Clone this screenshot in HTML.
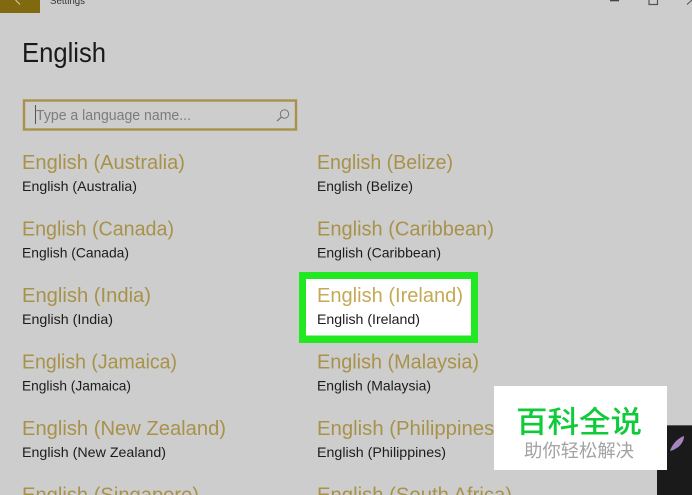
<!DOCTYPE html>
<html lang="en">
<head>
<meta charset="utf-8">
<title>English</title>
<style>
html,body{margin:0;padding:0;background:#cdcdcd;}
body{width:692px;height:495px;overflow:hidden;position:relative;font-family:"Liberation Sans",sans-serif;}
svg{position:absolute;left:0;top:0;}
.t{font-family:"Liberation Sans",sans-serif;font-size:20.5px;fill:#a8924a;}
.s{font-family:"Liberation Sans",sans-serif;font-size:14px;fill:#1c1c1c;}
.soft{filter:blur(0.3px);}
</style>
</head>
<body>
<svg width="692" height="495" viewBox="0 0 692 495" xmlns="http://www.w3.org/2000/svg">
  <rect width="692" height="495" fill="#cdcdcd"/>

  <!-- title bar -->
  <rect x="0" y="0" width="40" height="13" fill="#80690f"/>
  <g class="soft">
  <path d="M15.5 0 L20 4.5" fill="none" stroke="#d8cfa8" stroke-width="1"/>
  <text x="50" y="4" font-size="10.5" fill="#333" font-family="Liberation Sans, sans-serif" textLength="35" lengthAdjust="spacingAndGlyphs">Settings</text>
  <rect x="610" y="0" width="9" height="1.3" fill="#444"/>
  <path d="M649 0 V4.5 H657.5 V0" fill="none" stroke="#555" stroke-width="1.2"/>
  <path d="M687 4.5 L692 0" fill="none" stroke="#555" stroke-width="1.1"/>

  <!-- heading -->
  <text x="22" y="62" font-size="28" fill="#1a1a1a" font-family="Liberation Sans, sans-serif" textLength="84" lengthAdjust="spacingAndGlyphs">English</text>

  <!-- search box -->
  <rect x="24" y="100.5" width="272" height="29" fill="none" stroke="#a8924a" stroke-width="2.4"/>
  <rect x="35" y="105" width="1" height="19" fill="#555"/>
  <text x="36" y="120" font-size="14.5" fill="#7c7c7c" font-family="Liberation Sans, sans-serif" textLength="155" lengthAdjust="spacingAndGlyphs">Type a language name...</text>
  <circle cx="284.5" cy="114" r="4.2" fill="none" stroke="#777" stroke-width="1"/>
  <path d="M281.5 117 L277 121" stroke="#777" stroke-width="1.2" fill="none"/>
  </g>

  <!-- highlight -->
  <rect x="299" y="272" width="179" height="71" fill="#22e822"/>
  <rect x="306" y="279" width="165" height="56.5" fill="#ffffff"/>

  <g class="soft">
  <!-- left column -->
  <text class="t" x="22" y="169" textLength="163" lengthAdjust="spacingAndGlyphs">English (Australia)</text>
  <text class="s" x="22" y="191" textLength="115" lengthAdjust="spacingAndGlyphs">English (Australia)</text>
  <text class="t" x="22" y="235.5" textLength="152" lengthAdjust="spacingAndGlyphs">English (Canada)</text>
  <text class="s" x="22" y="257.5" textLength="107" lengthAdjust="spacingAndGlyphs">English (Canada)</text>
  <text class="t" x="22" y="302" textLength="129" lengthAdjust="spacingAndGlyphs">English (India)</text>
  <text class="s" x="22" y="324" textLength="91" lengthAdjust="spacingAndGlyphs">English (India)</text>
  <text class="t" x="22" y="368.5" textLength="155" lengthAdjust="spacingAndGlyphs">English (Jamaica)</text>
  <text class="s" x="22" y="390.5" textLength="109" lengthAdjust="spacingAndGlyphs">English (Jamaica)</text>
  <text class="t" x="22" y="435" textLength="204" lengthAdjust="spacingAndGlyphs">English (New Zealand)</text>
  <text class="s" x="22" y="457" textLength="144" lengthAdjust="spacingAndGlyphs">English (New Zealand)</text>
  <text class="t" x="22" y="501.5" textLength="177" lengthAdjust="spacingAndGlyphs">English (Singapore)</text>

  <!-- right column -->
  <text class="t" x="317" y="169" textLength="136" lengthAdjust="spacingAndGlyphs">English (Belize)</text>
  <text class="s" x="317" y="191" textLength="96" lengthAdjust="spacingAndGlyphs">English (Belize)</text>
  <text class="t" x="317" y="235.5" textLength="177" lengthAdjust="spacingAndGlyphs">English (Caribbean)</text>
  <text class="s" x="317" y="257.5" textLength="124" lengthAdjust="spacingAndGlyphs">English (Caribbean)</text>
  <text class="t" x="317" y="302" textLength="146" lengthAdjust="spacingAndGlyphs" style="fill:#c4aa55">English (Ireland)</text>
  <text class="s" x="317" y="324" textLength="103" lengthAdjust="spacingAndGlyphs">English (Ireland)</text>
  <text class="t" x="317" y="368.5" textLength="162" lengthAdjust="spacingAndGlyphs">English (Malaysia)</text>
  <text class="s" x="317" y="390.5" textLength="114" lengthAdjust="spacingAndGlyphs">English (Malaysia)</text>
  <text class="t" x="317" y="435" textLength="184" lengthAdjust="spacingAndGlyphs">English (Philippines)</text>
  <text class="s" x="317" y="457" textLength="129" lengthAdjust="spacingAndGlyphs">English (Philippines)</text>
  <text class="t" x="317" y="501.5" textLength="195" lengthAdjust="spacingAndGlyphs">English (South Africa)</text>
  </g>

  <!-- dark corner -->
  <rect x="657" y="425" width="35" height="70" fill="#1a1a1a"/>
  <rect x="657" y="425" width="35" height="1" fill="#555"/>
  <path d="M670 451 C672 444 678 438 684 436 C684 443 678 449 670 451 Z" fill="#a585c0"/>

  <!-- watermark -->
  <rect x="494" y="386" width="173" height="84" fill="#ffffff"/>
  <text x="516" y="432.5" font-size="30" font-weight="500" fill="#0fcb3a" font-family="Noto Sans CJK SC, sans-serif" textLength="126" lengthAdjust="spacingAndGlyphs">百科全说</text>
  <text x="524" y="457" font-size="18" fill="#a3a3a3" font-family="Noto Sans CJK SC, sans-serif" textLength="110" lengthAdjust="spacingAndGlyphs">助你轻松解决</text>
</svg>
</body>
</html>
